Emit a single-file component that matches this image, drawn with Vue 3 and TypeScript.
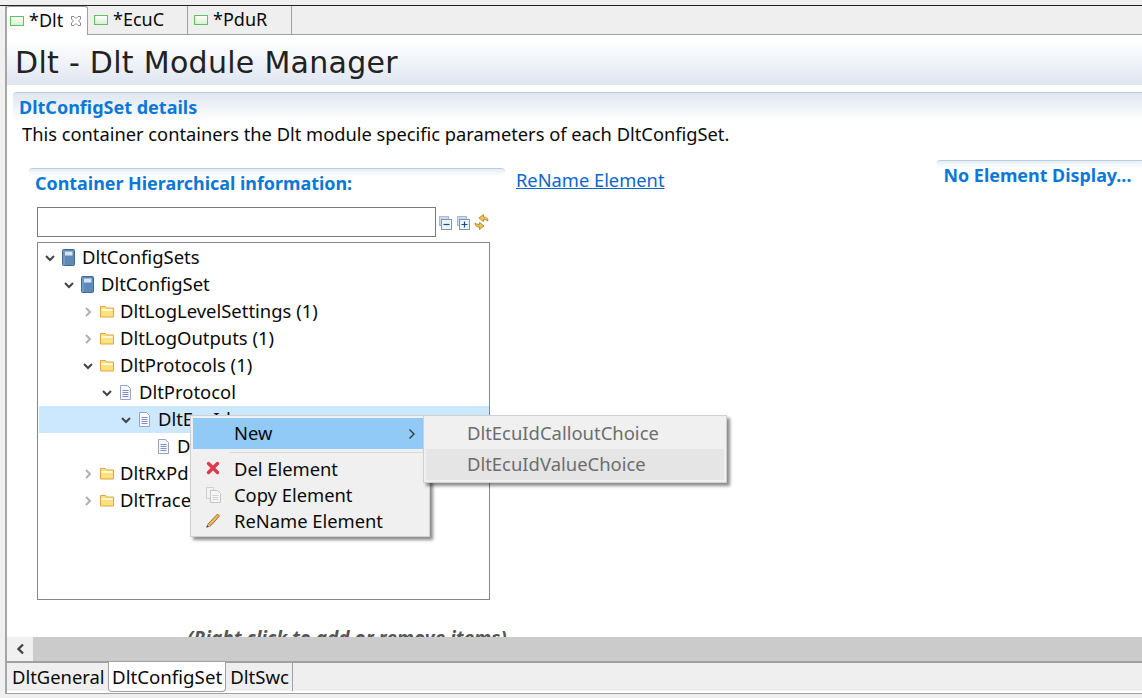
<script setup lang="ts">
type NodeIcon = 'book' | 'folder' | 'doc';

interface TreeRow {
  label: string;
  depth: number;
  icon: NodeIcon;
  open?: boolean;
  leaf?: boolean;
  selected?: boolean;
}

const editorTabs = [
  { label: '*Dlt', active: true },
  { label: '*EcuC', active: false },
  { label: '*PduR', active: false },
];

const pageTabs = [
  { label: 'DltGeneral', active: false },
  { label: 'DltConfigSet', active: true },
  { label: 'DltSwc', active: false },
];

// labels under the context menu are cut to what stays visible
const rows: TreeRow[] = [
  { label: 'DltConfigSets', depth: 0, icon: 'book', open: true },
  { label: 'DltConfigSet', depth: 1, icon: 'book', open: true },
  { label: 'DltLogLevelSettings (1)', depth: 2, icon: 'folder' },
  { label: 'DltLogOutputs (1)', depth: 2, icon: 'folder' },
  { label: 'DltProtocols (1)', depth: 2, icon: 'folder', open: true },
  { label: 'DltProtocol', depth: 3, icon: 'doc', open: true },
  { label: 'DltEcuId', depth: 4, icon: 'doc', open: true, selected: true },
  { label: 'D', depth: 5, icon: 'doc', leaf: true },
  { label: 'DltRxPd', depth: 2, icon: 'folder' },
  { label: 'DltTrace', depth: 2, icon: 'folder' },
];
</script>

<template>
  <div class="app">
    <div class="top-strip"></div>
    <div class="window">
      <div class="editor-tabs">
        <div
          v-for="tab in editorTabs"
          :key="tab.label"
          class="editor-tab"
          :class="{ 'editor-tab--active': tab.active }"
        >
          <span class="editor-tab__icon"></span>
          <span class="editor-tab__label">{{ tab.label }}</span>
          <svg v-if="tab.active" class="editor-tab__close" width="10" height="10" viewBox="0 0 10 10">
            <path d="M0.500 0.500h2.500l2 2 2-2h2.500v2.500l-2 2 2 2v2.500h-2.500l-2-2-2 2h-2.500v-2.500l2-2-2-2z" fill="#fff" stroke="#8a8a8a" stroke-width="1" />
          </svg>
        </div>
      </div>

      <div class="banner">Dlt - Dlt Module Manager</div>

      <div class="content">
        <div class="details-head">DltConfigSet details</div>
        <p class="details-text">This container containers the Dlt module specific parameters of each DltConfigSet.</p>

        <div class="columns">
          <section class="hier">
            <h3 class="sub-head">Container Hierarchical information:</h3>
            <div class="filter-row">
              <input class="filter" type="text" />
              <svg class="tool" width="14" height="14" viewBox="0 0 14 14">
                <rect x="0.5" y="0.5" width="9" height="9" fill="#c9d8ea" stroke="#a7bcd4" />
                <rect x="2.5" y="3.5" width="10" height="10" fill="#eef4fa" stroke="#7f97b2" />
                <path d="M4.500 8.500h6" stroke="#1d4f7c" stroke-width="1.200" />
              </svg>
              <svg class="tool" width="14" height="14" viewBox="0 0 14 14">
                <rect x="0.5" y="0.5" width="9" height="9" fill="#c9d8ea" stroke="#a7bcd4" />
                <rect x="2.5" y="3.5" width="10" height="10" fill="#eef4fa" stroke="#7f97b2" />
                <path d="M4.500 8.500h6M7.500 5.500v6" stroke="#1d4f7c" stroke-width="1.200" />
              </svg>
              <svg class="tool tool--sync" width="15" height="16" viewBox="0 0 15 16">
                <path d="M14 7C14 4 12 3 9.500 3V0.500L5 4l4.500 3.500v-2C11 5.500 12.500 6 14 7z" fill="#f0c454" stroke="#a97a1c" stroke-width="0.800" />
                <path d="M1 9C1 12 3 13 5.500 13v2.500L10 12 5.500 8.500v2C4 10.500 2.500 10 1 9z" fill="#f0c454" stroke="#a97a1c" stroke-width="0.800" />
              </svg>
            </div>

            <div class="tree">
              <div
                v-for="row in rows"
                :key="row.label"
                class="tree-row"
                :class="{ 'tree-row--selected': row.selected }"
                :style="{ paddingLeft: 6 + row.depth * 19 + 'px' }"
              >
                <svg class="twisty" width="12" height="12" viewBox="0 0 12 12">
                  <path v-if="row.open" d="M1 4l4 4 4-4" fill="none" stroke="#444" stroke-width="2" />
                  <path v-else-if="!row.leaf" d="M3 2l4 4-4 4" fill="none" stroke="#b0b0b0" stroke-width="2" />
                </svg>
                <svg v-if="row.icon === 'book'" class="node" width="14" height="17" viewBox="0 0 14 17">
                  <rect x="0.500" y="0.500" width="12" height="16" rx="1" fill="#5f8ab8" stroke="#3d6a99" />
                  <rect x="3" y="2.500" width="7.500" height="4" fill="#d6e5f3" />
                  <path d="M2 1v15" stroke="#86a9cd" />
                </svg>
                <svg v-else-if="row.icon === 'folder'" class="node" width="14" height="17" viewBox="0 0 14 17">
                  <path d="M0.500 3.500h5l1 1.500h7v9h-13z" fill="#fbe27f" stroke="#e0a544" />
                  <path d="M1.500 7h11" stroke="#fff8d2" stroke-width="2" />
                </svg>
                <svg v-else class="node" width="14" height="17" viewBox="0 0 14 17">
                  <path d="M1.500 1.500h7l3 3v11h-10z" fill="#f6f8fc" stroke="#98a4bf" />
                  <path d="M3.500 6.500h6M3.500 8.500h6M3.500 10.500h6M3.500 12.500h6" stroke="#7f90c0" />
                </svg>
                <span class="tree-row__label">{{ row.label }}</span>
              </div>
            </div>

            <p class="hint">(Right click to add or remove items)</p>

            <div class="context-menu">
              <div class="menu-row menu-row--hot">
                <span class="menu-row__text">New</span>
                <svg class="menu-row__arrow" width="8" height="12" viewBox="0 0 8 12">
                  <path d="M1.500 1.500l4.500 4.500-4.500 4.500" fill="none" stroke="#333" stroke-width="1.300" />
                </svg>
              </div>
              <div class="menu-sep"></div>
              <div class="menu-row">
                <svg class="menu-row__icon" width="14" height="14" viewBox="0 0 14 14">
                  <path d="M2.500 2.500l9 9M11.500 2.500l-9 9" stroke="#e0394a" stroke-width="3.400" stroke-linecap="round" />
                </svg>
                <span class="menu-row__text">Del Element</span>
              </div>
              <div class="menu-row">
                <svg class="menu-row__icon" width="16" height="16" viewBox="0 0 16 16">
                  <path d="M0.500 0.500h7v11h-7z" fill="#f2f2f2" stroke="#cfcfcf" />
                  <path d="M4.500 3.500h7l3 3v9h-10z" fill="#f7f7f7" stroke="#c6c6c6" />
                  <path d="M6.500 8.500h6M6.500 10.500h6M6.500 12.500h6" stroke="#d2d2d2" />
                </svg>
                <span class="menu-row__text">Copy Element</span>
              </div>
              <div class="menu-row">
                <svg class="menu-row__icon" width="14" height="15" viewBox="0 0 14 15">
                  <path d="M11.500 1L13.500 3 5 12.500 2 11z" fill="#eeb568" stroke="#a7702b" />
                  <path d="M2 10.500L0.500 14.500 5 13z" fill="#e8d6b5" stroke="#a7702b" stroke-width="0.500" />
                  <path d="M0.500 14.500l1-2.500 1.500 1.500z" fill="#2b3c58" />
                </svg>
                <span class="menu-row__text">ReName Element</span>
              </div>

              <div class="submenu">
                <div class="submenu__row">DltEcuIdCalloutChoice</div>
                <div class="submenu__row submenu__row--hot">DltEcuIdValueChoice</div>
              </div>
            </div>
          </section>

          <a class="rename-link">ReName Element</a>

          <section class="no-element">
            <h3 class="sub-head">No Element Display...</h3>
          </section>
        </div>
      </div>

      <div class="scrollbar">
        <div class="scrollbar__btn">
          <svg width="10" height="12" viewBox="0 0 10 12">
            <path d="M8 1.500L3.500 6 8 10.500" fill="none" stroke="#444" stroke-width="2.400" />
          </svg>
        </div>
      </div>

      <div class="page-tabs">
        <div
          v-for="tab in pageTabs"
          :key="tab.label"
          class="page-tab"
          :class="{ 'page-tab--active': tab.active }"
        >
          {{ tab.label }}
        </div>
      </div>
    </div>
    <div class="bottom-strip"></div>
  </div>
</template>

<style>
html,
body {
  margin: 0;
  overflow: hidden;
}
</style>

<style scoped>
.app {
  width: 1142px;
  height: 698px;
  display: flex;
  flex-direction: column;
  overflow: hidden;
  background: #f0f0f0;
  font-family: "Noto Sans", "Liberation Sans", sans-serif;
  font-size: 18.3px;
  color: #0a0a0a;
}

.top-strip {
  height: 5px;
  flex: none;
  background: #f0f0f0;
  border-bottom: 1px solid #222;
}

.window {
  flex: 1;
  min-height: 0;
  display: flex;
  flex-direction: column;
  margin-left: 5px;
  border-left: 2px solid #a6a6a6;
  background: #fff;
}

.editor-tabs {
  height: 28px;
  flex: none;
  display: flex;
  background: #efefef;
  border-bottom: 1px solid #a0a0a0;
  font-size: 18px;
}

.editor-tab {
  display: flex;
  align-items: center;
  gap: 5px;
  padding-left: 6px;
  width: 100px;
  box-sizing: border-box;
  border-right: 1px solid #a0a0a0;
}

.editor-tab:first-child {
  width: 81px;
  padding-left: 3px;
}

.editor-tab:nth-child(3) {
  width: 104px;
}

.editor-tab--active {
  background: #fff;
  margin-bottom: -1px;
  border-top-left-radius: 3px;
  border-top-right-radius: 3px;
  border-top: 1px solid #a0a0a0;
}

.editor-tab__icon {
  width: 12px;
  height: 8px;
  border: 1px solid #61c061;
  background: linear-gradient(#fff, #d8efd6);
}

.editor-tab__label {
  margin-top: -2px;
}

.editor-tab__close {
  margin-left: 3px;
}

.banner {
  height: 50px;
  flex: none;
  box-sizing: border-box;
  padding: 7px 0 0 8px;
  font-family: "DejaVu Sans", sans-serif;
  font-size: 30px;
  letter-spacing: 0.290px;
  line-height: 42px;
  color: #222;
  background: linear-gradient(#fff 12%, #dfe6f0);
}

.content {
  flex: 1;
  min-height: 0;
  overflow: hidden;
  padding-top: 7px;
}

.details-head {
  margin-left: 6px;
  height: 29px;
  box-sizing: border-box;
  padding: 2px 0 0 6px;
  border-top: 1px solid #b9cde0;
  border-top-left-radius: 4px;
  background: linear-gradient(#dfe6f0, #fff);
  color: #0b78d8;
  font-size: 18px;
  font-weight: 700;
  line-height: 24px;
}

.details-text {
  margin: 0 0 0 15px;
  line-height: 26px;
}

.columns {
  display: flex;
  align-items: flex-start;
  margin-top: 14px;
}

.hier {
  position: relative;
  width: 476px;
  margin-left: 22px;
  margin-top: 7px;
  flex: none;
}

.sub-head {
  margin: 0;
  height: 30px;
  box-sizing: border-box;
  padding: 1px 0 0 6px;
  font-size: 17.9px;
  font-weight: 700;
  line-height: 26px;
  color: #0b78d8;
  border-top: 1px solid #b9cde0;
  border-radius: 4px 4px 0 0;
  background: linear-gradient(#e8eef5, #fff 25%);
}

.filter-row {
  display: flex;
  align-items: center;
  margin: 9px 0 5px 8px;
}

.filter {
  width: 399px;
  height: 30px;
  box-sizing: border-box;
  border: 1px solid #7a7a7a;
  margin: 0 3px 0 0;
  padding: 0;
  background: #fff;
}

.tool {
  margin: 0 4px 0 0;
  position: relative;
  top: 1px;
}

.tool--sync {
  top: 0;
  margin-left: -1px;
}

.tree {
  width: 453px;
  height: 358px;
  margin-left: 8px;
  box-sizing: border-box;
  border: 1px solid #828790;
  padding-top: 1px;
  font-size: 18.45px;
}

.tree-row {
  height: 27px;
  display: flex;
  align-items: center;
  margin-left: 1px;
  width: 450px;
  box-sizing: border-box;
}

.tree-row--selected {
  background: #cce8ff;
}

.twisty {
  flex: none;
  margin-right: 5px;
}

.node {
  flex: none;
  margin-right: 6px;
}

.tree-row__label {
  white-space: nowrap;
  line-height: 27px;
  margin-top: -2px;
}

.hint {
  margin: 25px 0 0 158px;
  font-size: 19px;
  font-weight: 700;
  font-style: italic;
  line-height: 26px;
  color: #555;
  white-space: nowrap;
}

.context-menu {
  position: absolute;
  left: 161px;
  top: 247px;
  width: 240px;
  height: 122px;
  box-sizing: border-box;
  padding: 2px;
  background: #f0f0f0;
  border: 1px solid #d0d0d0;
  box-shadow: 3px 3px 3px rgba(0, 0, 0, 0.45);
  font-size: 18.35px;
}

.menu-row {
  position: relative;
  height: 26px;
  display: flex;
  align-items: center;
  padding-left: 41px;
}

.menu-row__text {
  margin-top: -2px;
}

.menu-row--hot {
  height: 31px;
  background: #91c9f7;
}

.menu-sep {
  height: 1px;
  margin: 3px 0 3px 36px;
  background: #d7d7d7;
}

.menu-row__icon {
  position: absolute;
  left: 13px;
  top: 5px;
}

.menu-row__arrow {
  position: absolute;
  right: 11px;
  top: 10px;
}

.submenu {
  position: absolute;
  left: 232px;
  top: -1px;
  width: 304px;
  height: 68px;
  box-sizing: border-box;
  padding: 2px;
  background: #f0f0f0;
  border: 1px solid #d0d0d0;
  box-shadow: 3px 3px 3px rgba(0, 0, 0, 0.45);
  color: #6d6d6d;
  font-size: 18.45px;
}

.submenu__row {
  height: 31px;
  padding-left: 41px;
  line-height: 29px;
}

.submenu__row--hot {
  background: #e5e5e5;
}

.rename-link {
  margin: 6px 0 0 11px;
  color: #0b66d0;
  text-decoration: underline;
  line-height: 26px;
  white-space: nowrap;
  flex: none;
}

.no-element {
  flex: none;
  width: 210px;
  margin: -1px 0 0 273px;
}

.scrollbar {
  height: 24px;
  flex: none;
  background: #cbcbcb;
}

.scrollbar__btn {
  width: 26px;
  height: 24px;
  display: flex;
  align-items: center;
  justify-content: center;
  background: #f0f0f0;
}

.page-tabs {
  height: 32px;
  flex: none;
  display: flex;
  box-sizing: border-box;
  background: #efefef;
  border-top: 2px solid #a0a0a0;
  border-bottom: 2px solid #fff;
}

.page-tab {
  padding: 0 3px 0 4px;
  line-height: 28px;
  font-size: 18.6px;
  border-right: 1px solid #a0a0a0;
}

.page-tab:first-child {
  width: 101px;
  box-sizing: border-box;
  padding: 0 0 0 5px;
  font-size: 18.4px;
  border-right: none;
}

.page-tab--active {
  background: #fff;
  margin-top: -1px;
  margin-bottom: -1px;
  padding: 0 3px;
  line-height: 29px;
  font-size: 18.7px;
  border-left: 1px solid #a0a0a0;
  border-bottom: 1px solid #a0a0a0;
  border-radius: 0 0 4px 4px;
}

.bottom-strip {
  height: 5px;
  flex: none;
  margin-left: 5px;
  box-sizing: border-box;
  border-top: 1px solid #a0a0a0;
  background: #efefef;
}
</style>
